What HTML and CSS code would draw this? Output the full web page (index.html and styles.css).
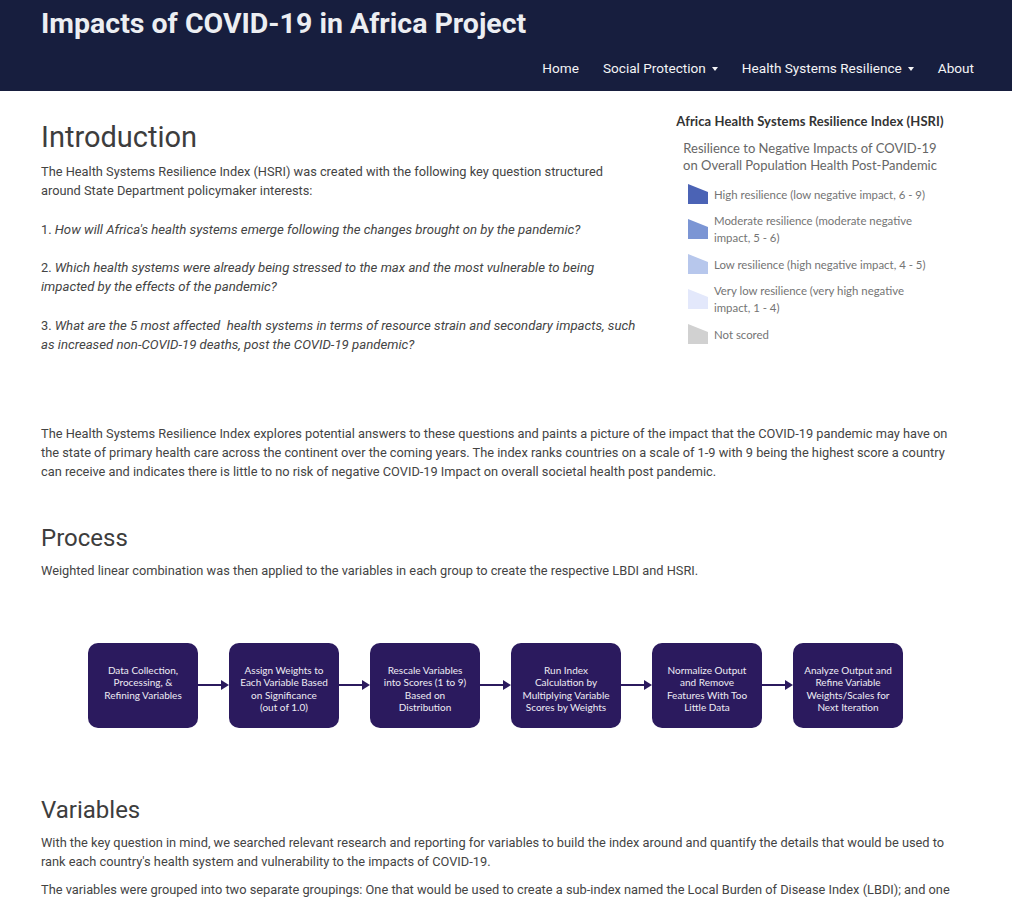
FILE: index.html
```html
<!DOCTYPE html>
<html lang="en">
<head>
<meta charset="utf-8">
<title>Impacts of COVID-19 in Africa Project</title>
<link rel="stylesheet" href="styles.css">
</head>
<body>
<header class="site-header">
  <div class="brand">Impacts of COVID-19 in Africa Project</div>
  <nav class="nav">
    <a class="nav-link" href="#">Home</a>
    <a class="nav-link" href="#">Social Protection <span class="caret"></span></a>
    <a class="nav-link" href="#">Health Systems Resilience <span class="caret"></span></a>
    <a class="nav-link" href="#">About</a>
  </nav>
</header>

<main class="main">
  <section class="intro">
    <div class="intro-text">
      <h1 class="h1">Introduction</h1>
      <p class="text">The Health Systems Resilience Index (HSRI) was created with the following key question structured around State Department policymaker interests:</p>
      <p class="text q">1. <em>How will Africa's health systems emerge following the changes brought on by the pandemic?</em></p>
      <p class="text q">2. <em>Which health systems were already being stressed to the max and the most vulnerable to being impacted by the effects of the pandemic?</em></p>
      <p class="text q">3. <em>What are the 5 most affected&nbsp; health systems in terms of resource strain and secondary impacts, such as increased non-COVID-19 deaths, post the COVID-19 pandemic?</em></p>
    </div>
    <aside class="legend">
      <div class="legend-title">Africa Health Systems Resilience Index (HSRI)</div>
      <div class="legend-sub">Resilience to Negative Impacts of COVID-19 on Overall Population Health Post-Pandemic</div>
      <ul class="legend-list">
        <li class="legend-item"><svg class="swatch" viewBox="0 0 20 20"><polygon points="0,0 20,8 20,20 0,20" fill="#4b63b5"/></svg><span>High resilience (low negative impact, 6 - 9)</span></li>
        <li class="legend-item"><svg class="swatch" viewBox="0 0 20 20"><polygon points="0,0 20,8 20,20 0,20" fill="#7b95d4"/></svg><span>Moderate resilience (moderate negative impact, 5 - 6)</span></li>
        <li class="legend-item"><svg class="swatch" viewBox="0 0 20 20"><polygon points="0,0 20,8 20,20 0,20" fill="#b7c7ec"/></svg><span>Low resilience (high negative impact, 4 - 5)</span></li>
        <li class="legend-item"><svg class="swatch" viewBox="0 0 20 20"><polygon points="0,0 20,8 20,20 0,20" fill="#e3e8fb"/></svg><span>Very low resilience (very high negative impact, 1 - 4)</span></li>
        <li class="legend-item"><svg class="swatch" viewBox="0 0 20 20"><polygon points="0,0 20,8 20,20 0,20" fill="#d1d1d1"/></svg><span>Not scored</span></li>
      </ul>
    </aside>
  </section>

  <p class="text explores">The Health Systems Resilience Index explores potential answers to these questions and paints a picture of the impact that the COVID-19 pandemic may have on the state of primary health care across the continent over the coming years. The index ranks countries on a scale of 1-9 with 9 being the highest score a country can receive and indicates there is little to no risk of negative COVID-19 Impact on overall societal health post pandemic.</p>

  <h2 class="h2 process-h">Process</h2>
  <p class="text">Weighted linear combination was then applied to the variables in each group to create the respective LBDI and HSRI.</p>

  <div class="flow">
    <div class="step">Data Collection,<br>Processing, &amp;<br>Refining Variables</div>
    <div class="arrow"></div>
    <div class="step">Assign Weights to<br>Each Variable Based<br>on Significance<br>(out of 1.0)</div>
    <div class="arrow"></div>
    <div class="step">Rescale Variables<br>into Scores (1 to 9)<br>Based on<br>Distribution</div>
    <div class="arrow"></div>
    <div class="step">Run Index<br>Calculation by<br>Multiplying Variable<br>Scores by Weights</div>
    <div class="arrow"></div>
    <div class="step">Normalize Output<br>and Remove<br>Features With Too<br>Little Data</div>
    <div class="arrow"></div>
    <div class="step">Analyze Output and<br>Refine Variable<br>Weights/Scales for<br>Next Iteration</div>
  </div>

  <h2 class="h2 variables-h">Variables</h2>
  <p class="text">With the key question in mind, we searched relevant research and reporting for variables to build the index around and quantify the details that would be used to rank each country's health system and vulnerability to the impacts of COVID-19.</p>
  <p class="text next">The variables were grouped into two separate groupings: One that would be used to create a sub-index named the Local Burden of Disease Index (LBDI); and one that would be used to create the Health Systems Resilience Index.</p>
</main>
</body>
</html>
```

FILE: styles.css
```css
* { box-sizing: border-box; }

html, body {
  margin: 0;
  padding: 0;
  background: #fff;
}

body {
  font-family: Roboto, "Liberation Sans", sans-serif;
  color: #444;
  font-size: 12.8px;
}

.site-header {
  background: #171e3e;
  height: 91px;
  display: flex;
  flex-direction: column;
  padding: 0 38px 0 41px;
}

.brand {
  height: 50px;
  line-height: 48px;
  font-size: 28.5px;
  font-weight: 700;
  color: #eceef2;
}

.nav {
  display: flex;
  justify-content: flex-end;
  align-items: center;
  height: 36px;
}

.nav-link {
  color: #f4f4f6;
  text-decoration: none;
  font-size: 13.6px;
  padding: 0 12px;
  display: flex;
  align-items: center;
}

.nav-link:last-child { padding-right: 0; }

.caret {
  display: inline-block;
  width: 0;
  height: 0;
  margin-left: 6px;
  margin-top: 2px;
  border-top: 4px solid #f4f4f6;
  border-left: 3.5px solid transparent;
  border-right: 3.5px solid transparent;
}

.main {
  padding: 0 50px 0 41px;
}

.intro {
  display: grid;
  grid-template-columns: 634px 270px;
  align-items: start;
}

.intro-text {
  padding-right: 34px;
  padding-top: 30px;
}

.h1 {
  font-size: 29px;
  font-weight: 400;
  line-height: 32px;
  margin: 0 0 9px;
  color: #3d3d3d;
}

.h2 {
  font-size: 24px;
  font-weight: 400;
  line-height: 26px;
  margin: 0 0 10px;
  color: #3d3d3d;
}

.text {
  margin: 0;
  line-height: 19.2px;
}

.text.q {
  margin-top: 19.2px;
}

.text em {
  font-style: italic;
  font-size: 13.2px;
}

.legend {
  padding-top: 22px;
  font-family: Lato, "Open Sans", sans-serif;
  color: #666;
}

.legend-title {
  font-size: 13px;
  font-weight: 700;
  line-height: 16px;
  letter-spacing: 0.1px;
  color: #333;
  text-align: center;
  white-space: nowrap;
}

.legend-sub {
  margin-top: 11px;
  font-size: 13px;
  line-height: 17px;
  color: #666;
  text-align: center;
  padding: 0 4px;
}

.legend-list {
  list-style: none;
  margin: 10px 0 0;
  padding: 0 0 0 13px;
  display: flex;
  flex-direction: column;
  gap: 8px;
}

.legend-item {
  display: flex;
  align-items: center;
  gap: 6px;
  font-size: 11.4px;
  line-height: 17px;
  color: #747474;
}

.swatch {
  width: 20px;
  height: 20px;
  flex: none;
}

.legend-item span { max-width: 215px; }

.explores {
  margin-top: 70px;
}

.process-h { margin-top: 43px; }

.flow {
  display: flex;
  align-items: center;
  margin: 63px 0 0 47px;
}

.step {
  width: 110px;
  height: 85px;
  background: #2b1a5e;
  border-radius: 10px;
  color: #eeecf4;
  font-family: Lato, "Open Sans", sans-serif;
  font-size: 10px;
  line-height: 12.4px;
  text-align: center;
  padding-top: 21px;
}

.arrow {
  width: 31px;
  height: 10px;
  display: flex;
  align-items: center;
}

.arrow::before {
  content: "";
  flex: 1;
  height: 2px;
  background: #2b1a5e;
}

.arrow::after {
  content: "";
  width: 0;
  height: 0;
  border-left: 8px solid #2b1a5e;
  border-top: 5px solid transparent;
  border-bottom: 5px solid transparent;
}

.variables-h { margin-top: 69px; }

.next { margin-top: 9px; }
```
